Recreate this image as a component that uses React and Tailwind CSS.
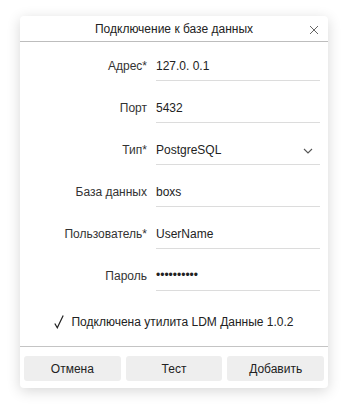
import React from "react";

const FIELDS = [
  { label: "Адрес*", value: "127.0. 0.1" },
  { label: "Порт", value: "5432" },
  { label: "Тип*", value: "PostgreSQL", select: true },
  { label: "База данных", value: "boxs" },
  { label: "Пользователь*", value: "UserName" },
  { label: "Пароль", value: "••••••••••", password: true },
];

function Field({ label, value, select, password }) {
  return (
    <div className="flex items-end h-[30px]">
      <div className="w-[127px] h-[30px] flex items-center justify-end text-[12px] text-[#333]">
        {label}
      </div>
      <div className="ml-[9px] w-[164px] h-[30px] flex items-center justify-between border-b border-[#dcdcdc] text-[12px] text-[#222]">
        <span className={password ? "pb-[2px]" : ""}>{value}</span>
        {select && (
          <svg width="10" height="6" viewBox="0 0 10 6" className="mr-[7px] mt-[3px]">
            <polyline points="1,1 5,5 9,1" fill="none" stroke="#555" strokeWidth="1.1" />
          </svg>
        )}
      </div>
    </div>
  );
}

export default function App() {
  return (
    <div className="w-[348px] h-[412px] bg-white pt-[16px] pl-[20px]" style={{ fontFamily: "'Liberation Sans', Arial, sans-serif" }}>
      <div className="w-[308px] h-[372px] bg-white rounded-[4px] shadow-[0_3px_14px_rgba(0,0,0,0.16)] flex flex-col">
        {/* header */}
        <div className="relative h-[26px] flex items-center justify-center border-b border-[#bdbdbd] text-[12px] text-[#222]">
          Подключение к базе данных
          <svg width="10" height="10" viewBox="0 0 10 10" className="absolute right-[9px] top-[9px]">
            <line x1="1" y1="1" x2="9" y2="9" stroke="#666" strokeWidth="1" />
            <line x1="9" y1="1" x2="1" y2="9" stroke="#666" strokeWidth="1" />
          </svg>
        </div>

        <div className="pt-[9px] flex flex-col gap-[12px]">
          {FIELDS.map((f) => (
            <Field key={f.label} {...f} />
          ))}
        </div>

        <div className="pt-[23px] pb-[16px] flex items-center justify-center text-[12px] text-[#222] leading-[16px]">
          <svg width="10" height="14" viewBox="0 0 10 14" className="mr-[7px] mb-[1px]">
            <polyline points="0.8,8.5 3.3,12.8 9.2,0.6" fill="none" stroke="#222" strokeWidth="1.2" />
          </svg>
          Подключена утилита LDM Данные 1.0.2
        </div>

        <div className="border-t border-[#c4c4c4] px-[4px] pt-[9px] grid grid-cols-3 gap-[5px]">
          {["Отмена", "Тест", "Добавить"].map((b) => (
            <button key={b} className="h-[25px] rounded-[3px] bg-[#eeeeee] text-[12px] text-[#222]">
              {b}
            </button>
          ))}
        </div>
      </div>
    </div>
  );
}
